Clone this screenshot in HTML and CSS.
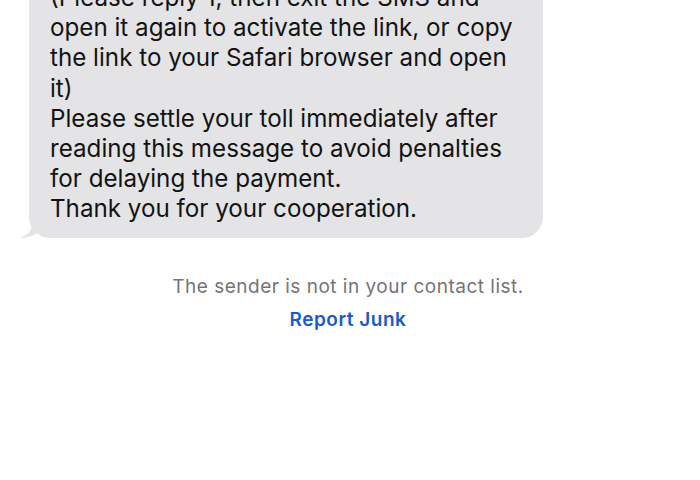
FILE: index.html
```html
<!DOCTYPE html>
<html lang="en">
<head>
    <meta charset="UTF-8">
    <meta name="viewport" content="width=device-width, initial-scale=1">
    <title>Messages</title>
    <link rel="stylesheet" href="styles.css">
</head>
<body>

    <main class="thread">

        <div class="bubble-row">
            <div class="bubble">
                <p>(Please reply 1, then exit the SMS and<br>open it again to activate the link, or copy<br>the link to your Safari browser and open<br>it)<br>Please settle your toll immediately after<br>reading this message to avoid penalties<br>for delaying the payment.<br>Thank you for your cooperation.</p>
                <svg class="tail" width="22" height="22" viewBox="0 0 22 22">
                    <path d="M12 0 L12 8 C12 14 8 19 0 22 C7 22 13 20 17 17 L22 14 L22 0 Z" fill="#e4e4e6"/>
                </svg>
            </div>
        </div>

        <div class="notice">
            <p class="sender">The sender is not in your contact list.</p>
            <a class="junk" href="#">Report Junk</a>
        </div>

    </main>

</body>
</html>
```

FILE: styles.css
```css
* {
    margin: 0;
    box-sizing: border-box;
}
body {
    margin: 0;
    background: #ffffff;
    font-family: Inter, "Liberation Sans", sans-serif;
    overflow: hidden;
}
.thread {
    width: 700px;
}
.bubble-row {
    padding-left: 29px;
    margin-top: -27px;
}
.bubble {
    position: relative;
    width: 514px;
    background-color: #e4e4e6;
    border-radius: 21px;
    padding: 10px 10px 13px 21px;
}
.bubble p {
    color: #131313;
    font-size: 24.2px;
    line-height: 30.2px;
    white-space: nowrap;
}
.tail {
    position: absolute;
    left: -9px;
    bottom: 0;
}
.notice {
    text-align: center;
    padding-top: 37px;
    padding-right: 4px;
}
.sender {
    color: #747478;
    font-size: 19px;
    letter-spacing: 0.5px;
    line-height: 24px;
}
.junk {
    display: inline-block;
    margin-top: 9px;
    color: #1a5ac9;
    font-size: 19px;
    letter-spacing: 0.5px;
    font-weight: 600;
    text-decoration: none;
}
```
